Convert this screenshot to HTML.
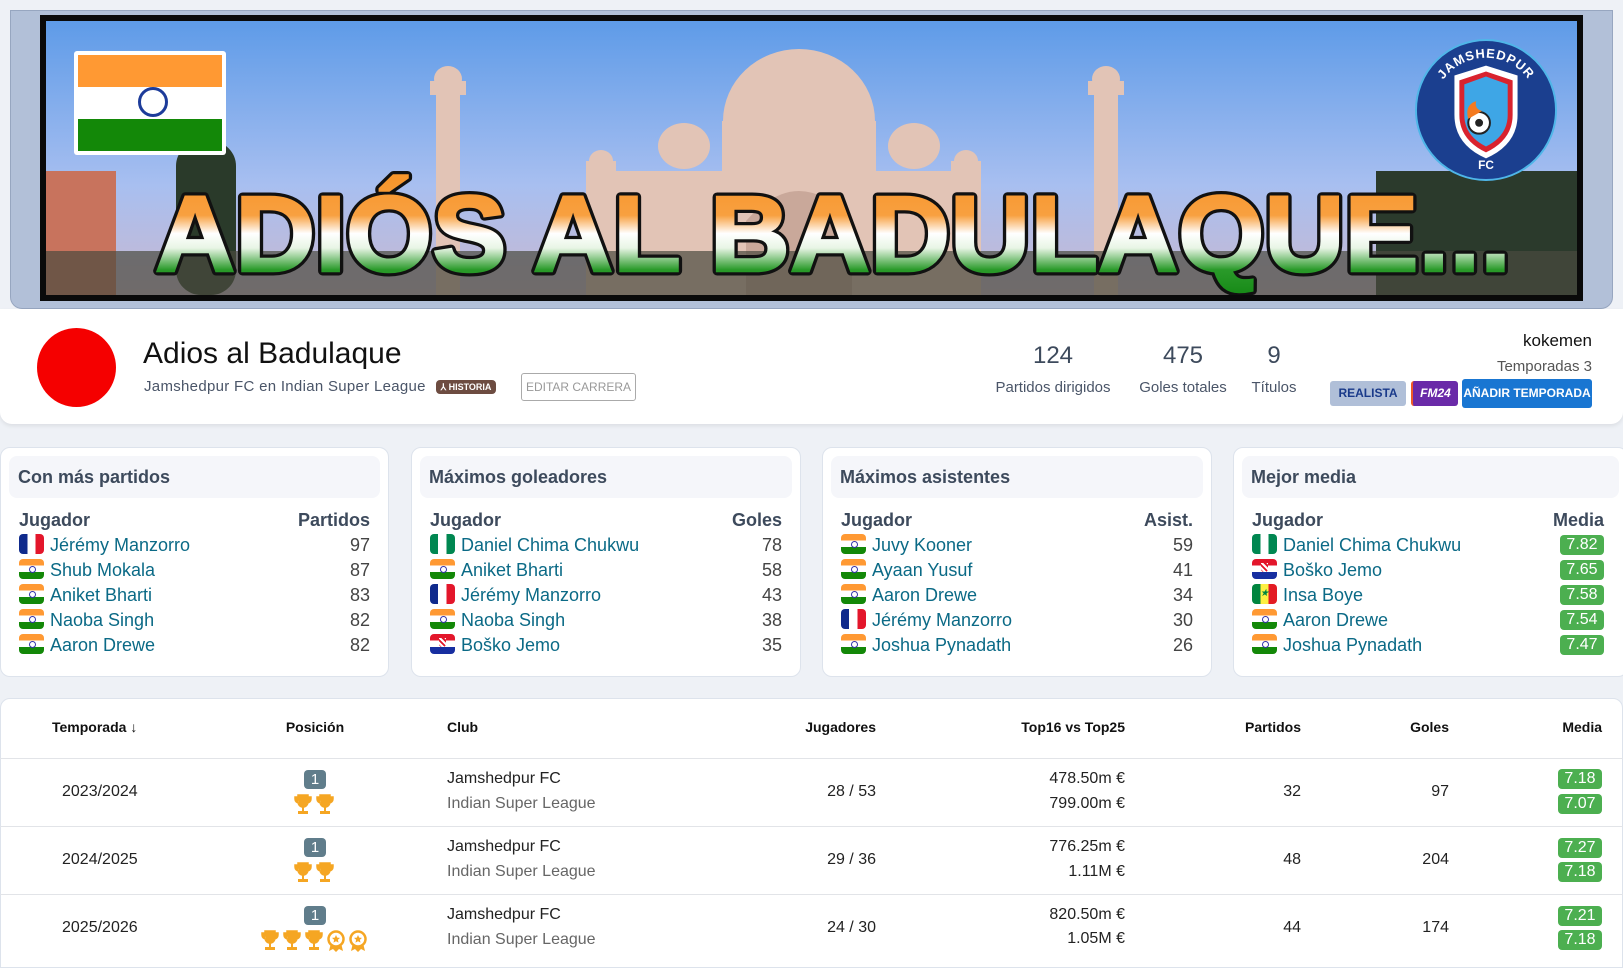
<!DOCTYPE html>
<html><head><meta charset="utf-8"><style>
*{box-sizing:border-box;margin:0;padding:0}
body{width:1623px;height:961px;overflow:hidden;background:#eef1f6;font-family:"Liberation Sans",sans-serif;position:relative}
.a{position:absolute}
.card{position:absolute;top:447px;height:230px;background:#fff;border:1px solid #dde3ec;border-radius:10px}
.card .hd{position:absolute;left:8px;right:8px;top:8px;height:42px;background:#f5f6fa;border-radius:8px;font-weight:bold;font-size:18px;color:#3d4a5c;line-height:42px;padding-left:9px}
.card .ch{position:absolute;top:62px;left:18px;right:18px;font-weight:bold;font-size:18px;color:#3d4a5c}
.card .ch span{float:right}
.rows{position:absolute;top:85px;left:18px;right:18px}
.row{height:25px;line-height:25px;font-size:18px;color:#0b6a86;position:relative}
.row .n{position:absolute;right:0;top:0;color:#444}
.fl{display:inline-block;width:25px;height:20px;border-radius:4px;vertical-align:-3px;margin-right:6px;overflow:hidden;position:relative}
.in{background:linear-gradient(#f93 0 33%,#fff 33% 66%,#138808 66%)}
.in:after{content:"";position:absolute;left:10px;top:7px;width:5px;height:5px;border-radius:50%;border:1px solid #33a}
.fr{background:linear-gradient(90deg,#0f2a8c 0 33%,#fff 33% 66%,#e3162b 66%)}
.ng{background:linear-gradient(90deg,#008751 0 33%,#fff 33% 66%,#008751 66%)}
.hr{background:linear-gradient(#e3162b 0 33%,#fff 33% 66%,#172ea0 66%)}
.hr:after{content:"";position:absolute;left:9px;top:4px;width:7px;height:9px;background:repeating-linear-gradient(45deg,#e3162b 0 2px,#fff 2px 4px);border-radius:0 0 3px 3px}
.sn{background:linear-gradient(90deg,#00853f 0 33%,#fdef42 33% 66%,#e31b23 66%)}
.sn:after{content:"★";position:absolute;left:8px;top:1px;font-size:10px;color:#00853f;line-height:18px}
.g{display:inline-block;background:#4caf50;color:#fff;border-radius:4px;font-size:16px;width:44px;height:20px;line-height:20px;text-align:center}
.row .g{position:absolute;right:0;top:2px}
.t{position:absolute;font-size:16px;color:#222}
.th{position:absolute;font-size:14px;font-weight:bold;color:#111;top:719px}
.r{text-align:right}
.pb{position:absolute;width:22px;height:19px;background:#607d8b;color:#fff;border-radius:4px;font-size:15px;text-align:center;line-height:19px}
.tr{position:absolute;height:22px;display:flex;gap:4px}
.line{position:absolute;left:0;right:0;height:1px;background:#e2e4e8}
</style></head><body>
<svg width="0" height="0" style="position:absolute"><defs>
<symbol id="tro" viewBox="0 0 18 22"><path d="M4 1h10v7a5 5 0 0 1-10 0z M4 3H1v2a4 4 0 0 0 4 4 M14 3h3v2a4 4 0 0 1-4 4" fill="#f5a623" stroke="#f5a623" stroke-width="1.5"/><rect x="8" y="12" width="2" height="5" fill="#f5a623"/><rect x="4" y="17" width="10" height="3" fill="#f5a623"/></symbol>
<symbol id="med" viewBox="0 0 18 22"><path d="M4 13l-2 8 4-2 3 3 0-7z M14 13l2 8-4-2-3 3 0-7z" fill="#f5a623"/><circle cx="9" cy="9" r="7.5" fill="#fff" stroke="#f5a623" stroke-width="2.5"/><path d="M9 5l1.2 2.6 2.8.3-2.1 1.9.6 2.8L9 11.2 6.5 12.6l.6-2.8L5 7.9l2.8-.3z" fill="#f5a623"/></symbol>
</defs></svg>

<!-- banner -->
<div class="a" style="left:10px;top:10px;width:1603px;height:299px;background:#b2c0d8;border-radius:0 0 12px 12px;border:1px solid #97a6c0"></div>
<div class="a" style="left:40px;top:15px;width:1543px;height:286px;background:#0a0a0a"></div>
<svg class="a" style="left:46px;top:21px" width="1531" height="274" viewBox="0 0 1531 274">
<defs>
<linearGradient id="sky" x1="0" y1="0" x2="0" y2="1"><stop offset="0" stop-color="#5e9be8"/><stop offset="0.6" stop-color="#a8bff0"/><stop offset="1" stop-color="#c9b8d0"/></linearGradient>
<linearGradient id="tx" x1="0" y1="0" x2="0" y2="1"><stop offset="0.05" stop-color="#f7962c"/><stop offset="0.35" stop-color="#f8a040"/><stop offset="0.5" stop-color="#ffffff"/><stop offset="0.62" stop-color="#e8f5e5"/><stop offset="0.8" stop-color="#2a9a2a"/><stop offset="1" stop-color="#178a17"/></linearGradient>
</defs>
<rect width="1531" height="274" fill="url(#sky)"/>
<g fill="#e2c4b6">
<rect x="390" y="70" width="24" height="204"/><rect x="384" y="60" width="36" height="14"/><ellipse cx="402" cy="58" rx="14" ry="13"/>
<rect x="1048" y="70" width="24" height="204"/><rect x="1042" y="60" width="36" height="14"/><ellipse cx="1060" cy="58" rx="14" ry="13"/>
<rect x="540" y="140" width="30" height="134"/><ellipse cx="555" cy="140" rx="12" ry="11"/>
<rect x="905" y="140" width="30" height="134"/><ellipse cx="920" cy="140" rx="12" ry="11"/>
<rect x="570" y="150" width="350" height="124"/>
<ellipse cx="753" cy="100" rx="76" ry="72"/><rect x="676" y="100" width="154" height="60"/>
<ellipse cx="638" cy="125" rx="26" ry="23"/><ellipse cx="868" cy="125" rx="26" ry="23"/>
</g>
<g fill="#c9a89a"><path d="M700 200 q53 -60 106 0 v74 h-106z"/></g>
<rect x="0" y="150" width="70" height="124" fill="#c8735d"/>
<rect x="130" y="120" width="60" height="154" fill="#2a3a2a" rx="25"/>
<rect x="1330" y="150" width="201" height="124" fill="#2b3a2c"/>
<rect x="0" y="230" width="1531" height="44" fill="#4a4a3e" opacity="0.7"/>
<text x="787" y="250" text-anchor="middle" font-family="Liberation Sans" font-weight="900" font-size="108" textLength="1356" lengthAdjust="spacingAndGlyphs" fill="url(#tx)" stroke="#111" stroke-width="9" paint-order="stroke" stroke-linejoin="round">ADIÓS AL BADULAQUE...</text>
<text x="787" y="250" text-anchor="middle" font-family="Liberation Sans" font-weight="900" font-size="108" textLength="1356" lengthAdjust="spacingAndGlyphs" fill="none" stroke="url(#tx)" stroke-width="2.5">ADIÓS AL BADULAQUE...</text>
</svg>
<!-- india flag -->
<div class="a" style="left:74px;top:51px;width:152px;height:104px;background:#fff;border-radius:3px;padding:4px">
<div style="height:32px;background:#ff9933"></div><div style="height:32px;background:#fff;position:relative"><div style="position:absolute;left:60px;top:0;width:30px;height:30px;border-radius:50%;border:3px solid #1d3c9a"></div></div><div style="height:32px;background:#138808"></div></div>
<!-- logo -->
<svg class="a" style="left:1414px;top:38px" width="144" height="144" viewBox="0 0 146 146">
<defs><path id="arc" d="M20 73 a53 53 0 0 1 106 0"/></defs>
<circle cx="73" cy="73" r="71" fill="#1b3f8f" stroke="#4fb6e8" stroke-width="2"/>
<path d="M73 28 l32 10 v40 q0 30 -32 44 q-32 -14 -32 -44 v-40z" fill="#fff"/>
<path d="M73 34 l27 9 v35 q0 25 -27 38 q-27 -13 -27 -38 v-35z" fill="#d9232e"/>
<path d="M73 39 l22 8 v31 q0 21 -22 32 q-22 -11 -22 -32 v-31z" fill="#3ea6e6"/>
<circle cx="66" cy="86" r="11" fill="#fff" stroke="#222" stroke-width="2"/><circle cx="66" cy="86" r="4" fill="#222"/>
<path d="M55 82 q-4 -14 8 -18 q-2 8 6 10z" fill="#f47a20"/>
<text font-size="13" font-weight="bold" fill="#fff" font-family="Liberation Sans" letter-spacing="1"><textPath href="#arc" startOffset="50%" text-anchor="middle">JAMSHEDPUR</textPath></text>
<text x="73" y="133" text-anchor="middle" fill="#fff" font-size="12" font-weight="bold" font-family="Liberation Sans">FC</text>
</svg>

<!-- header card -->
<div class="a" style="left:0;top:309px;width:1623px;height:115px;background:#fff;border-radius:0 0 12px 12px;box-shadow:0 2px 4px rgba(0,0,0,.08)"></div>
<div class="a" style="left:37px;top:328px;width:79px;height:79px;border-radius:50%;background:#f50000"></div>
<div class="a" style="left:143px;top:337px;font-size:30px;color:#111">Adios al Badulaque</div>
<div class="a" style="left:144px;top:378px;font-size:15px;color:#4a5568;letter-spacing:.3px">Jamshedpur FC en Indian Super League</div>
<div class="a" style="left:436px;top:380px;width:60px;height:14px;background:#6d4c41;color:#fff;font-size:9px;font-weight:bold;border-radius:4px;text-align:center;line-height:14px">⅄ HISTORIA</div>
<div class="a" style="left:521px;top:373px;width:115px;height:28px;border:1px solid #aaa;border-radius:3px;color:#999;font-size:12px;text-align:center;line-height:26px">EDITAR CARRERA</div>
<div class="a" style="left:983px;top:342px;width:140px;text-align:center;font-size:24px;color:#3d4a5c">124</div>
<div class="a" style="left:983px;top:379px;width:140px;text-align:center;font-size:15px;color:#4a5568">Partidos dirigidos</div>
<div class="a" style="left:1123px;top:342px;width:120px;text-align:center;font-size:24px;color:#3d4a5c">475</div>
<div class="a" style="left:1123px;top:379px;width:120px;text-align:center;font-size:15px;color:#4a5568">Goles totales</div>
<div class="a" style="left:1234px;top:342px;width:80px;text-align:center;font-size:24px;color:#3d4a5c">9</div>
<div class="a" style="left:1234px;top:379px;width:80px;text-align:center;font-size:15px;color:#4a5568">Títulos</div>
<div class="a r" style="right:31px;top:331px;font-size:17px;color:#111">kokemen</div>
<div class="a r" style="right:31px;top:358px;font-size:15px;color:#555">Temporadas 3</div>
<div class="a" style="left:1330px;top:381px;width:76px;height:25px;background:#b0bfd8;color:#1a3a8a;font-size:12px;font-weight:bold;border-radius:3px;text-align:center;line-height:25px">REALISTA</div>
<div class="a" style="left:1411px;top:381px;width:47px;height:25px;background:#6a2aa8;color:#fff;font-size:12px;font-weight:bold;font-style:italic;border-radius:3px;text-align:center;line-height:25px;border-left:2px solid #f05a28">FM24</div>
<div class="a" style="left:1462px;top:379px;width:130px;height:29px;background:#1976d2;color:#fff;font-size:12px;font-weight:bold;border-radius:3px;text-align:center;line-height:29px">AÑADIR TEMPORADA</div>

<!-- cards -->
<div class="card" style="left:0;width:389px"><div class="hd">Con más partidos</div><div class="ch">Jugador<span>Partidos</span></div>
<div class="rows">
<div class="row"><i class="fl fr"></i>Jérémy Manzorro<span class="n">97</span></div>
<div class="row"><i class="fl in"></i>Shub Mokala<span class="n">87</span></div>
<div class="row"><i class="fl in"></i>Aniket Bharti<span class="n">83</span></div>
<div class="row"><i class="fl in"></i>Naoba Singh<span class="n">82</span></div>
<div class="row"><i class="fl in"></i>Aaron Drewe<span class="n">82</span></div></div></div>

<div class="card" style="left:411px;width:390px"><div class="hd">Máximos goleadores</div><div class="ch">Jugador<span>Goles</span></div>
<div class="rows">
<div class="row"><i class="fl ng"></i>Daniel Chima Chukwu<span class="n">78</span></div>
<div class="row"><i class="fl in"></i>Aniket Bharti<span class="n">58</span></div>
<div class="row"><i class="fl fr"></i>Jérémy Manzorro<span class="n">43</span></div>
<div class="row"><i class="fl in"></i>Naoba Singh<span class="n">38</span></div>
<div class="row"><i class="fl hr"></i>Boško Jemo<span class="n">35</span></div></div></div>

<div class="card" style="left:822px;width:390px"><div class="hd">Máximos asistentes</div><div class="ch">Jugador<span>Asist.</span></div>
<div class="rows">
<div class="row"><i class="fl in"></i>Juvy Kooner<span class="n">59</span></div>
<div class="row"><i class="fl in"></i>Ayaan Yusuf<span class="n">41</span></div>
<div class="row"><i class="fl in"></i>Aaron Drewe<span class="n">34</span></div>
<div class="row"><i class="fl fr"></i>Jérémy Manzorro<span class="n">30</span></div>
<div class="row"><i class="fl in"></i>Joshua Pynadath<span class="n">26</span></div></div></div>

<div class="card" style="left:1233px;width:395px"><div class="hd">Mejor media</div><div class="ch" style="right:23px">Jugador<span>Media</span></div>
<div class="rows" style="right:23px">
<div class="row"><i class="fl ng"></i>Daniel Chima Chukwu<span class="g">7.82</span></div>
<div class="row"><i class="fl hr"></i>Boško Jemo<span class="g">7.65</span></div>
<div class="row"><i class="fl sn"></i>Insa Boye<span class="g">7.58</span></div>
<div class="row"><i class="fl in"></i>Aaron Drewe<span class="g">7.54</span></div>
<div class="row"><i class="fl in"></i>Joshua Pynadath<span class="g">7.47</span></div></div></div>

<!-- table -->
<div class="a" style="left:0;top:698px;width:1623px;height:270px;background:#fff;border:1px solid #dde3ec;border-radius:10px 10px 0 0"></div>
<div class="th" style="left:52px">Temporada ↓</div>
<div class="th" style="left:255px;width:120px;text-align:center">Posición</div>
<div class="th" style="left:447px">Club</div>
<div class="th r" style="right:747px">Jugadores</div>
<div class="th r" style="right:498px">Top16 vs Top25</div>
<div class="th r" style="right:322px">Partidos</div>
<div class="th r" style="right:174px">Goles</div>
<div class="th r" style="right:21px">Media</div>
<div class="line" style="top:758px"></div>
<div class="line" style="top:826px"></div>
<div class="line" style="top:894px"></div>

<!-- row1 -->
<div class="t" style="left:62px;top:783px">2023/2024</div>
<div class="pb" style="left:304px;top:770px">1</div>
<div class="tr" style="left:294px;top:794px"><svg width="18" height="22"><use href="#tro"/></svg><svg width="18" height="22"><use href="#tro"/></svg></div>
<div class="t" style="left:447px;top:770px;font-size:16px">Jamshedpur FC</div>
<div class="t" style="left:447px;top:795px;color:#666">Indian Super League</div>
<div class="t r" style="right:747px;top:783px">28 / 53</div>
<div class="t r" style="right:498px;top:770px">478.50m €</div>
<div class="t r" style="right:498px;top:795px">799.00m €</div>
<div class="t r" style="right:322px;top:783px">32</div>
<div class="t r" style="right:174px;top:783px">97</div>
<div class="g a" style="right:21px;top:769px">7.18</div>
<div class="g a" style="right:21px;top:794px">7.07</div>
<!-- row2 -->
<div class="t" style="left:62px;top:851px">2024/2025</div>
<div class="pb" style="left:304px;top:838px">1</div>
<div class="tr" style="left:294px;top:862px"><svg width="18" height="22"><use href="#tro"/></svg><svg width="18" height="22"><use href="#tro"/></svg></div>
<div class="t" style="left:447px;top:838px">Jamshedpur FC</div>
<div class="t" style="left:447px;top:863px;color:#666">Indian Super League</div>
<div class="t r" style="right:747px;top:851px">29 / 36</div>
<div class="t r" style="right:498px;top:838px">776.25m €</div>
<div class="t r" style="right:498px;top:863px">1.11M €</div>
<div class="t r" style="right:322px;top:851px">48</div>
<div class="t r" style="right:174px;top:851px">204</div>
<div class="g a" style="right:21px;top:838px">7.27</div>
<div class="g a" style="right:21px;top:862px">7.18</div>
<!-- row3 -->
<div class="t" style="left:62px;top:919px">2025/2026</div>
<div class="pb" style="left:304px;top:906px">1</div>
<div class="tr" style="left:261px;top:930px"><svg width="18" height="22"><use href="#tro"/></svg><svg width="18" height="22"><use href="#tro"/></svg><svg width="18" height="22"><use href="#tro"/></svg><svg width="18" height="22"><use href="#med"/></svg><svg width="18" height="22"><use href="#med"/></svg></div>
<div class="t" style="left:447px;top:906px">Jamshedpur FC</div>
<div class="t" style="left:447px;top:931px;color:#666">Indian Super League</div>
<div class="t r" style="right:747px;top:919px">24 / 30</div>
<div class="t r" style="right:498px;top:906px">820.50m €</div>
<div class="t r" style="right:498px;top:930px">1.05M €</div>
<div class="t r" style="right:322px;top:919px">44</div>
<div class="t r" style="right:174px;top:919px">174</div>
<div class="g a" style="right:21px;top:906px">7.21</div>
<div class="g a" style="right:21px;top:930px">7.18</div>
</body></html>
